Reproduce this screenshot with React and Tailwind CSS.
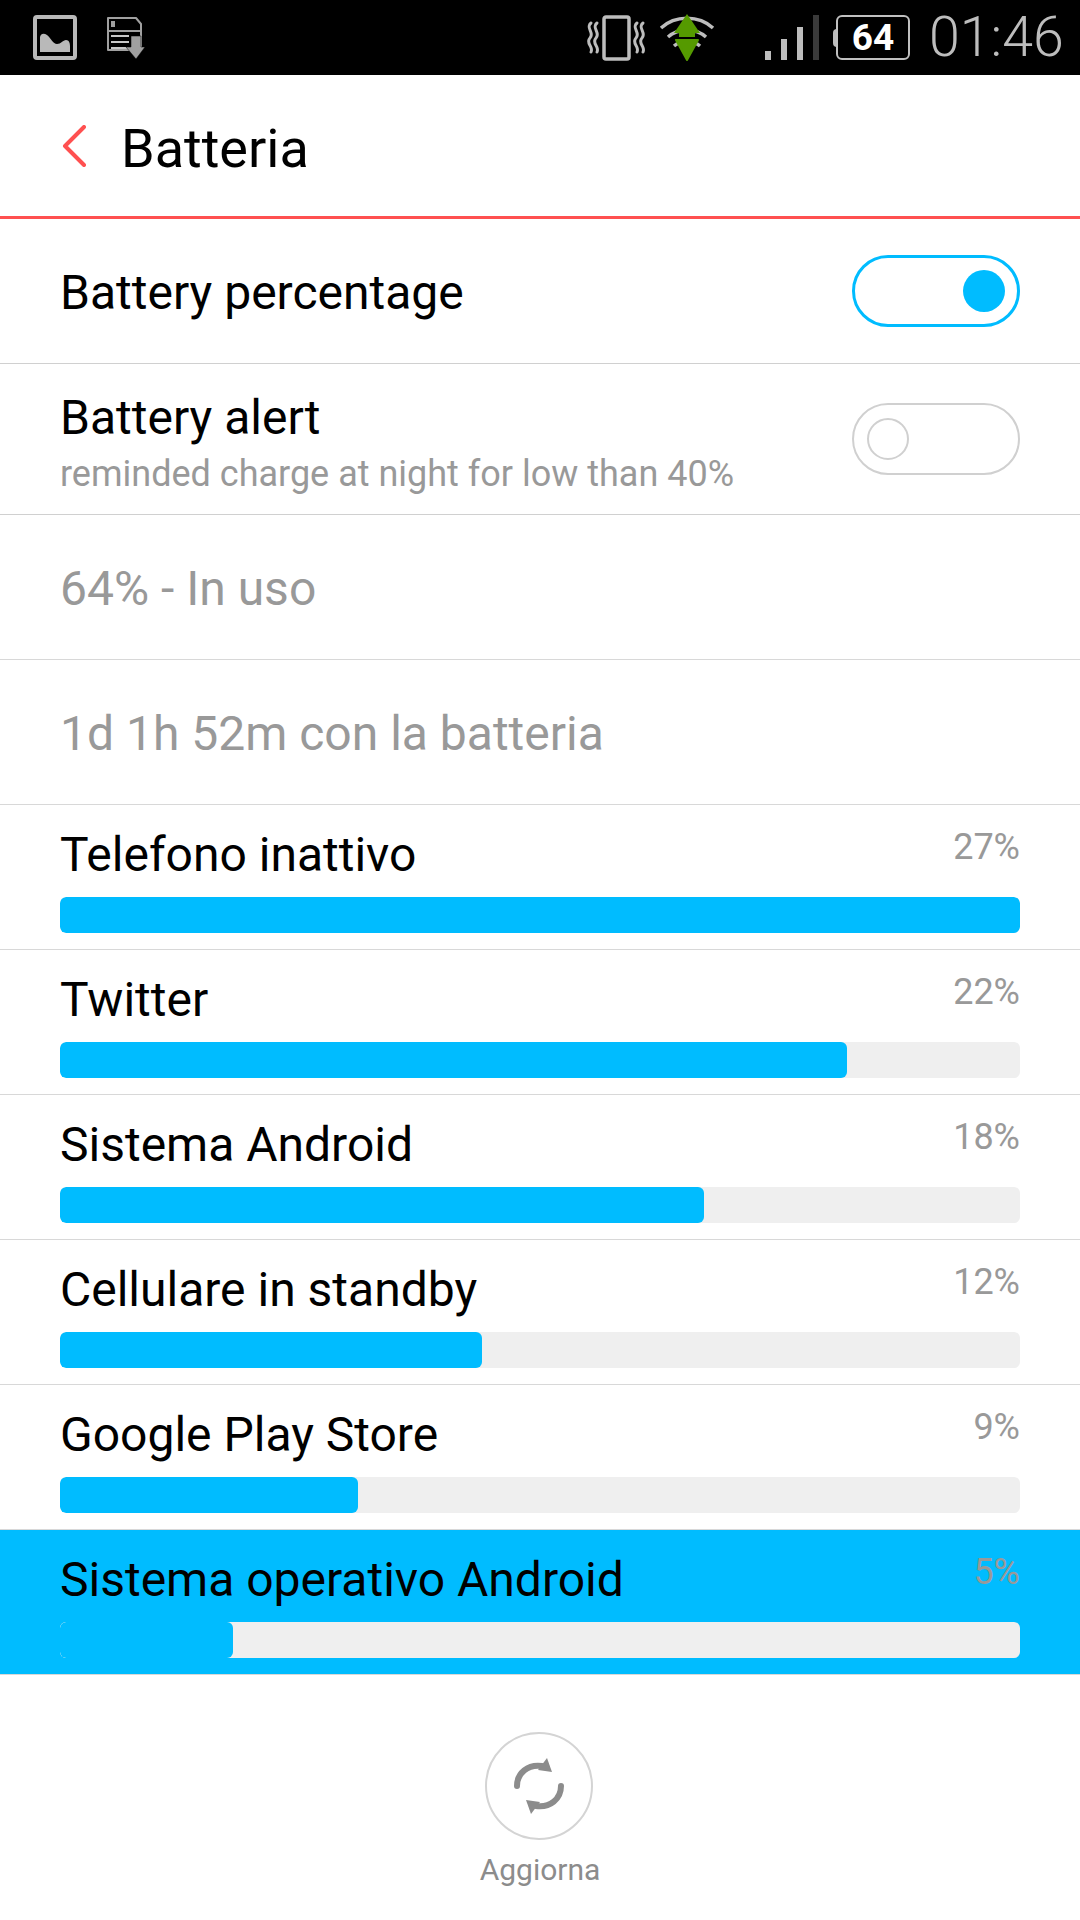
const font = { fontFamily: "Roboto, sans-serif" };

function ImageIcon() {
  return (
    <svg width="44" height="45" viewBox="0 0 44 45" className="ml-[33px] mt-[15px]">
      <rect x="2" y="2" width="40" height="41" rx="2" fill="none" stroke="#b9b9b9" strokeWidth="4" />
      <path d="M7 37V22C8 18 11 18 14 20C18 23 20 29 24 29C28 29 30 25 33 25C36 25 37 28 37 31V37Z" fill="#b9b9b9" />
    </svg>
  );
}

function DocIcon() {
  return (
    <svg width="40" height="44" viewBox="0 0 40 44" className="ml-[29px] mt-[16px]">
      <path d="M2 2H30L35 8V34H2Z" fill="none" stroke="#a0a0a0" strokeWidth="2" strokeLinejoin="round" />
      <path d="M2 15H35" stroke="#a0a0a0" strokeWidth="2" />
      <rect x="5" y="5" width="4" height="6" fill="#a0a0a0" />
      <path d="M5 20H23M5 26H23M5 32H23" stroke="#c8c8c8" strokeWidth="2" />
      <path d="M25 20H35V31H39L30 43L20 31H25Z" fill="#a0a0a0" stroke="#000" strokeWidth="0.5" />
    </svg>
  );
}

function VibrateIcon() {
  return (
    <svg width="64" height="46" viewBox="0 0 64 46" className="ml-[439px] mt-[15px]">
      <rect x="19" y="2" width="25" height="42" rx="2" fill="none" stroke="#bdbdbd" strokeWidth="3.5" />
      <path d="M6 8C0 13 10 18 5 23C0 28 9 32 6 37M12 8C6 13 16 18 11 23C6 28 15 32 12 37" fill="none" stroke="#bdbdbd" strokeWidth="3" strokeLinecap="round" />
      <path d="M52 8C46 13 56 18 51 23C46 28 55 32 52 37M58 8C52 13 62 18 57 23C52 28 61 32 58 37" fill="none" stroke="#bdbdbd" strokeWidth="3" strokeLinecap="round" />
    </svg>
  );
}

function WifiIcon() {
  return (
    <svg width="56" height="48" viewBox="0 0 56 48" className="ml-[10px] mt-[14px]">
      <path d="M2 14C16 1 40 1 54 14" fill="none" stroke="#bdbdbd" strokeWidth="3.5" />
      <path d="M9 23C19 14 37 14 47 23" fill="none" stroke="#bdbdbd" strokeWidth="3.5" />
      <path d="M15 32C22 26 34 26 41 32" fill="none" stroke="#bdbdbd" strokeWidth="3.5" />
      <path d="M28 0L41 19H15Z" fill="#559a00" />
      <rect x="20" y="19" width="16" height="4" fill="#559a00" />
      <path d="M17 26H39L28 46Z" fill="#559a00" strokeLinejoin="round" stroke="#559a00" strokeWidth="2" />
    </svg>
  );
}

function SignalIcon() {
  return (
    <svg width="54" height="46" viewBox="0 0 54 46" className="ml-[50px] mt-[15px]">
      <rect x="0" y="36" width="6" height="9" fill="#bdbdbd" />
      <rect x="16" y="24" width="6" height="21" fill="#bdbdbd" />
      <rect x="32" y="12" width="6" height="33" fill="#bdbdbd" />
      <rect x="48" y="0" width="6" height="45" fill="#3a3a3a" />
    </svg>
  );
}

function BatteryIcon() {
  return (
    <div className="relative ml-[14px] mt-[15px] h-[45px] w-[77px]">
      <div className="absolute left-0 top-[14px] h-[18px] w-[4px] rounded-l bg-[#bdbdbd]" />
      <div className="absolute left-[3px] top-0 flex h-[45px] w-[74px] items-center justify-center rounded-[6px] border-[2px] border-[#c0c0c0]">
        <span className="text-[37px] font-bold leading-none text-white" style={font}>64</span>
      </div>
    </div>
  );
}

function StatusBar() {
  return (
    <div className="flex h-[75px] bg-black">
      <ImageIcon />
      <DocIcon />
      <VibrateIcon />
      <WifiIcon />
      <SignalIcon />
      <BatteryIcon />
      <span className="ml-[19px] mt-[8px] text-[55.5px] font-light leading-[60px] text-[#bdbdbd]">01:46</span>
    </div>
  );
}

function Toggle({ on }) {
  return (
    <div className={`flex h-[72px] w-[168px] items-center rounded-full border-[2px] ${on ? "justify-end border-[#00bcff] border-[3px] pr-[12px]" : "justify-start border-[#d0d0d0] pl-[13px]"}`}>
      <div className={`h-[42px] w-[42px] rounded-full ${on ? "bg-[#00bcff]" : "border-[2px] border-[#d0d0d0]"}`} />
    </div>
  );
}

function UsageRow({ name, pct, width, highlight }) {
  return (
    <div className={`flex h-[145px] flex-col border-b border-[#d8d8d8] px-[60px] ${highlight ? "bg-[#00bcff]" : ""}`}>
      <div className="flex h-[92px] items-start justify-between">
        <span className="mt-[22px] text-[48px] leading-[56px] text-black">{name}</span>
        <span className="mt-[21px] text-[36px] leading-[42px] text-[#999]">{pct}</span>
      </div>
      <div className="h-[36px] w-[960px] overflow-hidden rounded-[6px] bg-[#efefef]">
        <div className="h-[36px] rounded-[6px] bg-[#00bcff]" style={{ width }} />
      </div>
    </div>
  );
}

const rows = [
  { name: "Telefono inattivo", pct: "27%", width: 960 },
  { name: "Twitter", pct: "22%", width: 787 },
  { name: "Sistema Android", pct: "18%", width: 644 },
  { name: "Cellulare in standby", pct: "12%", width: 422 },
  { name: "Google Play Store", pct: "9%", width: 298 },
  { name: "Sistema operativo Android", pct: "5%", width: 173, highlight: true },
];

export default function App() {
  return (
    <div className="h-[1920px] w-[1080px] overflow-hidden bg-white" style={font}>
      <StatusBar />
      <div className="flex h-[144px] items-center border-b-[3px] border-[#ff5050]">
        <svg width="24" height="42" viewBox="0 0 24 42" className="ml-[62px] mt-[1px]">
          <path d="M22 2L3 21L22 40" fill="none" stroke="#ff5050" strokeWidth="4" strokeLinecap="round" strokeLinejoin="round" />
        </svg>
        <span className="ml-[35px] mt-[7px] text-[54px] leading-[60px] text-black">Batteria</span>
      </div>
      <div className="flex h-[145px] items-center justify-between border-b border-[#d0d0d0] px-[60px]">
        <span className="mt-[4px] text-[48px] leading-[56px] text-black">Battery percentage</span>
        <Toggle on />
      </div>
      <div className="flex h-[151px] items-center justify-between border-b border-[#d0d0d0] px-[60px]">
        <div className="flex flex-col">
          <span className="mt-[6px] text-[48px] leading-[56px] text-black">Battery alert</span>
          <span className="mt-[7px] text-[36px] leading-[42px] text-[#999]">reminded charge at night for low than 40%</span>
        </div>
        <Toggle />
      </div>
      <div className="flex h-[145px] items-center border-b border-[#d8d8d8] px-[60px] pt-[3px] text-[48px] text-[#999]">64% - In uso</div>
      <div className="flex h-[145px] items-center border-b border-[#d8d8d8] px-[60px] pt-[3px] text-[48px] text-[#999]">1d 1h 52m con la batteria</div>
      {rows.map((r) => (
        <UsageRow key={r.name} {...r} />
      ))}
      <div className="flex flex-col items-center pt-[57px]">
        <div className="-ml-[2px] flex h-[108px] w-[108px] items-center justify-center rounded-full border-[2px] border-[#d4d4d4]">
          <svg width="50" height="56" viewBox="0 0 50 56">
            <path d="M3 28C3 15 14 6 28 8" fill="none" stroke="#8c8c8c" strokeWidth="6" strokeLinecap="round" />
            <path d="M33 0L38 14L24 12Z" fill="#8c8c8c" />
            <path d="M47 28C47 41 36 50 22 48" fill="none" stroke="#8c8c8c" strokeWidth="6" strokeLinecap="round" />
            <path d="M17 56L12 42L26 44Z" fill="#8c8c8c" />
          </svg>
        </div>
        <span className="mt-[12px] text-[30px] leading-[36px] text-[#8c8c8c]">Aggiorna</span>
      </div>
    </div>
  );
}
